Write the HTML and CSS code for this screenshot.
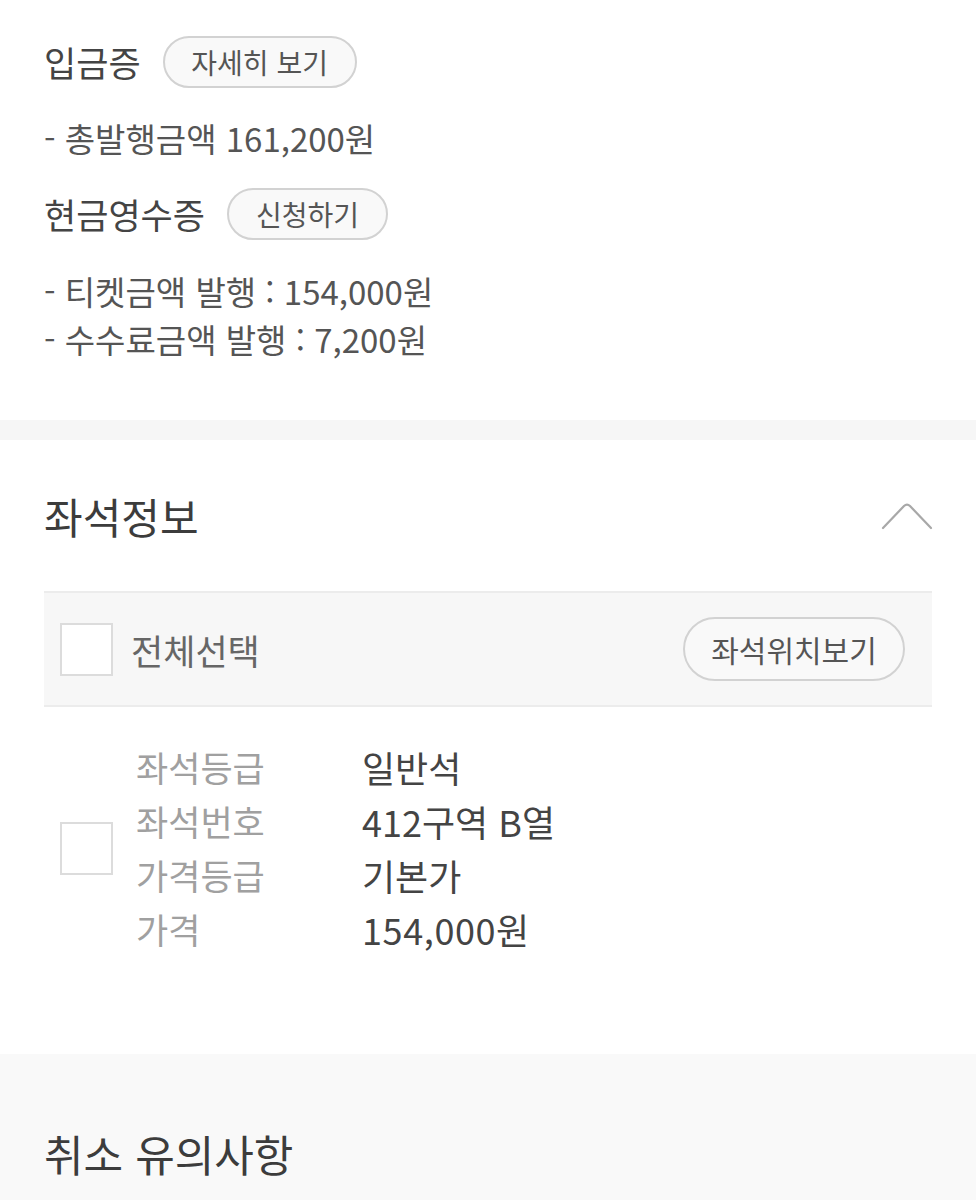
FILE: index.html
```html
<!DOCTYPE html>
<html lang="ko">
<head>
<meta charset="utf-8">
<link rel="stylesheet" href="styles.css">
</head>
<body>
<section class="receipt">
  <div class="doc-row">
    <h3 class="doc-title">입금증</h3>
    <button class="pill pill-detail">자세히 보기</button>
  </div>
  <ul class="doc-list first">
    <li>- 총발행금액 161,200원</li>
  </ul>
  <div class="doc-row">
    <h3 class="doc-title">현금영수증</h3>
    <button class="pill pill-apply">신청하기</button>
  </div>
  <ul class="doc-list last">
    <li>- 티켓금액 발행 : 154,000원</li>
    <li>- 수수료금액 발행 : 7,200원</li>
  </ul>
</section>
<div class="band"></div>
<section class="seats">
  <div class="seats-head">
    <h2 class="sec-title">좌석정보</h2>
    <svg class="chev" width="52" height="30" viewBox="0 0 52 30"><path d="M2 27 L23 5 Q26 2 29 5 L50 27" fill="none" stroke="#a8a8a8" stroke-width="2.2" stroke-linecap="round" stroke-linejoin="round"/></svg>
  </div>
  <div class="table">
    <div class="table-head">
      <span class="box"></span>
      <span class="all">전체선택</span>
      <button class="pill pill-seat">좌석위치보기</button>
    </div>
    <div class="seat-row">
      <span class="box"></span>
      <dl class="info">
        <dt>좌석등급</dt><dd>일반석</dd>
        <dt>좌석번호</dt><dd>412구역 B열</dd>
        <dt>가격등급</dt><dd>기본가</dd>
        <dt>가격</dt><dd class="price">154,000원</dd>
      </dl>
    </div>
  </div>
</section>
<section class="notice">
  <h2 class="sec-title big">취소 유의사항</h2>
</section>
</body>
</html>
```

FILE: styles.css
```css
* { box-sizing: border-box; }
html, body { margin: 0; padding: 0; }
body {
  width: 976px;
  background: #fff;
  font-family: "Noto Sans CJK KR", "Noto Sans", sans-serif;
  color: #444;
}
h2, h3, ul, dl, dd { margin: 0; padding: 0; }
ul { list-style: none; }

.receipt { padding: 36px 44px 57px; }
.doc-row { display: flex; align-items: center; height: 52px; }
.doc-title { font-size: 35px; font-weight: 400; color: #444; line-height: 52px; margin-right: 22px; }
.pill {
  font-family: inherit;
  background: #f9f9f9;
  border: 2px solid #d2d2d2;
  border-radius: 40px;
  color: #555;
  padding: 0;
  display: flex; align-items: center; justify-content: center;
}
.pill-detail { width: 194px; height: 52px; font-size: 28px; }
.pill-apply { width: 161px; height: 52px; font-size: 28px; }
.doc-list { margin: 26px 0; }
.doc-list li { font-size: 33px; line-height: 48px; color: #555; }
.doc-list.last { margin: 27px 0 0; }

.band { height: 20px; background: #f6f6f6; }

.seats { padding: 0 44px 98px; }
.seats-head { display: flex; align-items: center; justify-content: space-between; height: 151px; }
.sec-title { font-size: 42px; font-weight: 400; color: #3c3c3c; line-height: 50px; }
.sec-title.big { font-size: 43px; }
.chev { margin-right: -1px; }

.table { border-top: 2px solid #ececec; }
.table-head {
  display: flex; align-items: center;
  height: 114px;
  background: #f7f7f7;
  border-bottom: 2px solid #ececec;
  padding: 0 27px 0 16px;
}
.box {
  width: 53px; height: 53px;
  border: 2px solid #dcdcdc;
  background: #fff;
  flex: none;
}
.all { font-size: 35px; color: #666; margin-left: 18px; flex: 1; }
.pill-seat { width: 222px; height: 64px; font-size: 30px; background: #f9f9f9; }

.seat-row { display: flex; align-items: center; padding: 33px 16px 0; }
.info {
  display: grid;
  grid-template-columns: 226px auto;
  margin-left: 23px;
  line-height: 54px;
}
.info dt { color: #a0a0a0; font-size: 35px; }
.info dd { color: #444; font-size: 36px; }
.info dd.price { letter-spacing: 0.6px; }

.notice { background: #f9f9f9; padding: 74px 44px 60px; min-height: 200px; }
```
